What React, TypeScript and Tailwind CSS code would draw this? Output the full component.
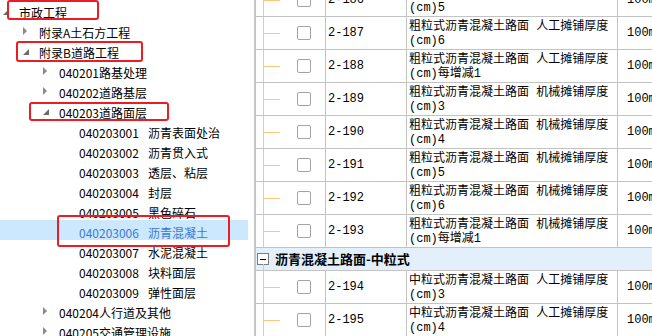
type TreeItem = {
  level: number;
  text: string;
  name?: string;
  state?: 'open' | 'closed';
  selected?: boolean;
};

const treeItems: TreeItem[] = [
  { level: 0, text: '市政工程', state: 'open' },
  { level: 1, text: '附录A土石方工程', state: 'closed' },
  { level: 1, text: '附录B道路工程', state: 'open' },
  { level: 2, text: '040201路基处理', state: 'closed' },
  { level: 2, text: '040202道路基层', state: 'closed' },
  { level: 2, text: '040203道路面层', state: 'open' },
  { level: 3, text: '040203001', name: '沥青表面处治' },
  { level: 3, text: '040203002', name: '沥青贯入式' },
  { level: 3, text: '040203003', name: '透层、粘层' },
  { level: 3, text: '040203004', name: '封层' },
  { level: 3, text: '040203005', name: '黑色碎石' },
  { level: 3, text: '040203006', name: '沥青混凝土', selected: true },
  { level: 3, text: '040203007', name: '水泥混凝土' },
  { level: 3, text: '040203008', name: '块料面层' },
  { level: 3, text: '040203009', name: '弹性面层' },
  { level: 2, text: '040204人行道及其他', state: 'closed' },
  { level: 2, text: '040205交通管理设施', state: 'closed' },
];

const indent = ['pl-[3px]', 'pl-[23px]', 'pl-[43px]', 'pl-[63px]'];

type Row =
  | { kind: 'item'; code: string; l1: string; l2: string }
  | { kind: 'group'; title: string };

const rows: Row[] = [
  { kind: 'item', code: '2-186', l1: '粗粒式沥青混凝土路面 人工摊铺厚度', l2: '(cm)5' },
  { kind: 'item', code: '2-187', l1: '粗粒式沥青混凝土路面 人工摊铺厚度', l2: '(cm)6' },
  { kind: 'item', code: '2-188', l1: '粗粒式沥青混凝土路面 人工摊铺厚度', l2: '(cm)每增减1' },
  { kind: 'item', code: '2-189', l1: '粗粒式沥青混凝土路面 机械摊铺厚度', l2: '(cm)3' },
  { kind: 'item', code: '2-190', l1: '粗粒式沥青混凝土路面 机械摊铺厚度', l2: '(cm)4' },
  { kind: 'item', code: '2-191', l1: '粗粒式沥青混凝土路面 机械摊铺厚度', l2: '(cm)5' },
  { kind: 'item', code: '2-192', l1: '粗粒式沥青混凝土路面 机械摊铺厚度', l2: '(cm)6' },
  { kind: 'item', code: '2-193', l1: '粗粒式沥青混凝土路面 机械摊铺厚度', l2: '(cm)每增减1' },
  { kind: 'group', title: '沥青混凝土路面-中粒式' },
  { kind: 'item', code: '2-194', l1: '中粒式沥青混凝土路面 人工摊铺厚度', l2: '(cm)3' },
  { kind: 'item', code: '2-195', l1: '中粒式沥青混凝土路面 人工摊铺厚度', l2: '(cm)4' },
];

function Tree() {
  return (
    <div className="relative w-[254px] shrink-0 pr-[6px] text-[12px] text-black [font-family:'Noto_Sans_CJK_SC','Noto_Sans',sans-serif]">
      {treeItems.map((item, i) => (
        <div
          key={i}
          className={`flex h-5 items-center whitespace-nowrap ${indent[item.level]} ${item.selected ? 'bg-[#cce8ff] text-[#3a79cf]' : ''}`}
        >
          <div className="flex w-4 shrink-0 items-center">
            {item.state === 'closed' && (
              <svg width="5" height="8" viewBox="0 0 5 8" className="mt-[2px]">
                <polygon points="0,0 4,4 0,8" fill="#8a8a8a" />
              </svg>
            )}
            {item.state === 'open' && (
              <svg width="6" height="6" viewBox="0 0 6 6" className="mt-[4px]">
                <polygon points="6,0 6,6 0,6" fill="#6a6a6a" />
              </svg>
            )}
          </div>
          <span className="mt-[5px]">{item.text}</span>
          {item.name && <span className="ml-[9px] mt-[5px]">{item.name}</span>}
        </div>
      ))}

      {/* red annotation boxes */}
      <div className="absolute left-[7px] top-0 h-[20px] w-[92px] rounded-[3px] border-2 border-[#ea1c24]" />
      <div className="absolute left-[16px] top-[41px] h-[21px] w-[127px] rounded-[3px] border-2 border-[#ea1c24]" />
      <div className="absolute left-[29px] top-[102px] h-[19px] w-[140px] rounded-[3px] border-2 border-[#ea1c24]" />
      <div className="absolute left-[57px] top-[215px] h-[32px] w-[173px] rounded-[3px] border-2 border-[#ea1c24]" />
    </div>
  );
}

function Table() {
  return (
    <div className="h-[336px] min-w-0 flex-1 overflow-hidden border-l-2 border-[#c6c6c6] text-[12px] text-black [font-family:'Liberation_Mono','Noto_Sans_CJK_SC',monospace]">
      <div className="-mt-[16px]">
        {rows.map((row, i) =>
          row.kind === 'group' ? (
            <div key={i} className="relative flex h-[23px] items-center border-b border-[#c3c3c3] bg-[#e3f0fb]">
              <div className="ml-[1px] flex size-[12px] items-center justify-center border border-[#7c7c7c] bg-white">
                <div className="h-px w-[6px] bg-black" />
              </div>
              <span className="ml-[6px] text-[13px] font-bold [font-family:'Noto_Sans_CJK_SC',sans-serif]">{row.title}</span>
              <div className="absolute bottom-0 left-[7px] h-[6px] w-px bg-[#fcc77a]" />
            </div>
          ) : (
            <div key={i} className="flex h-[33px] border-b border-[#c3c3c3]">
              <div className="flex w-[70px] shrink-0 items-center border-r border-[#c3c3c3]">
                <div className="ml-[7px] w-px self-stretch bg-[#fcc77a]" />
                <div className="h-px w-[16px] bg-[#fcc77a]" />
                <div className="ml-[17px] size-[14px] rounded-[2px] border border-[#a3a3a3] bg-white" />
              </div>
              <div className="flex w-[81px] shrink-0 items-center border-r border-[#c3c3c3] pl-[2px]">{row.code}</div>
              <div className="w-[211px] shrink-0 overflow-hidden whitespace-nowrap border-r border-[#c3c3c3] pl-[2px] pt-[3px] leading-[14px]">
                <div>{row.l1}</div>
                <div>{row.l2}</div>
              </div>
              <div className="flex min-w-0 flex-1 items-center overflow-hidden whitespace-nowrap pl-[9px]">100m2</div>
            </div>
          )
        )}
      </div>
    </div>
  );
}

export default function App() {
  return (
    <div className="flex h-[336px] w-[652px] overflow-hidden bg-white">
      <Tree />
      <Table />
    </div>
  );
}
